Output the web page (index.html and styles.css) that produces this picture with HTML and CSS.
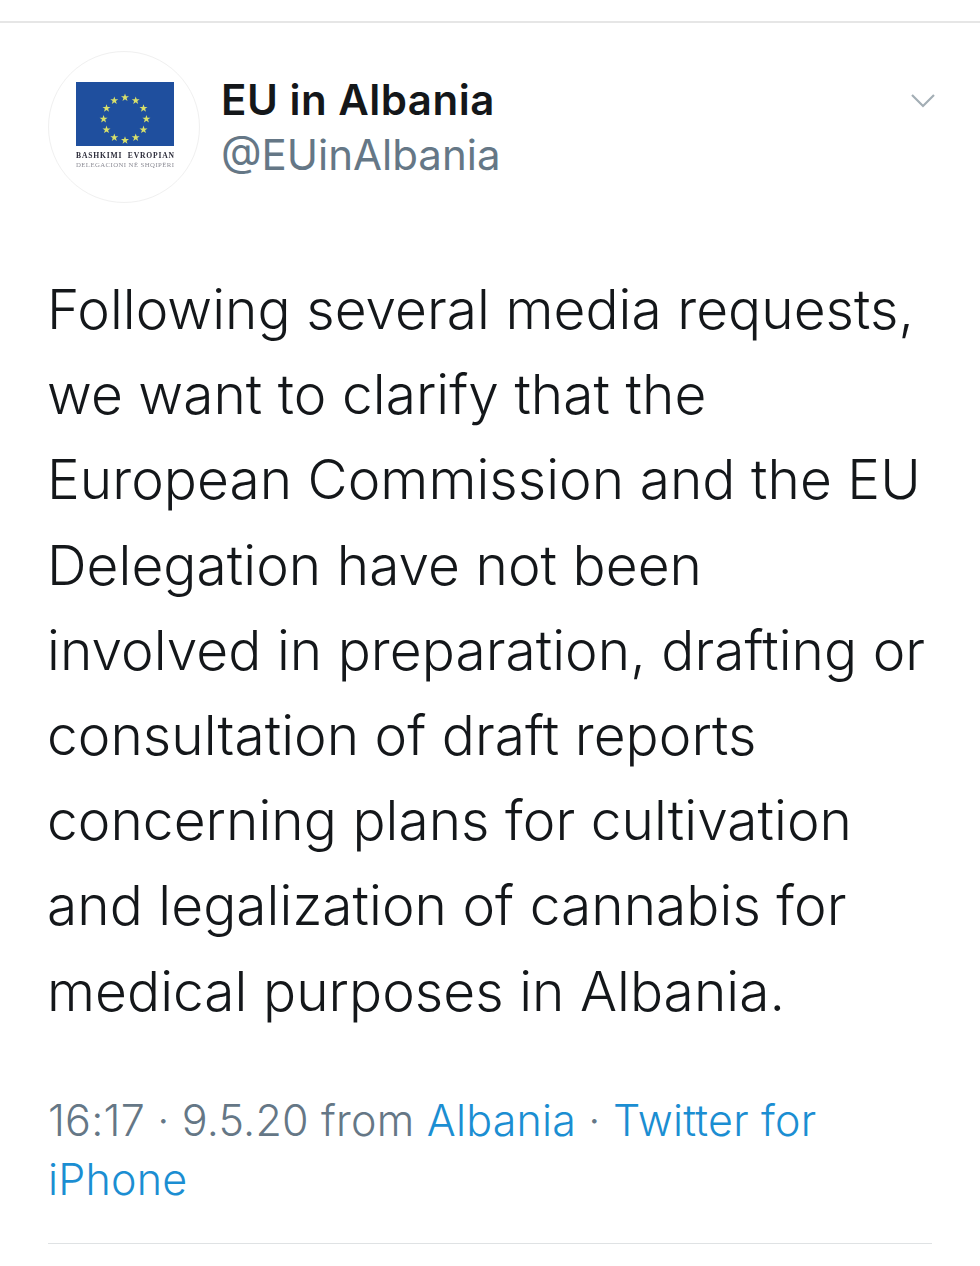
FILE: index.html
```html
<!DOCTYPE html>
<html lang="en">
<head>
<meta charset="utf-8">
<title>EU in Albania</title>
<link rel="stylesheet" href="styles.css">
</head>
<body>
<article class="tweet">
  <header class="head">
    <div class="avatar">
      <svg class="logo" width="152" height="152" viewBox="0 0 152 152">
        <rect x="28" y="31" width="98" height="64" fill="#1f4f9e"/>
        <g fill="#d8e06a">
          <polygon id="s" points="77,42.5 78,45.3 81,45.3 78.6,47.1 79.5,50 77,48.3 74.5,50 75.4,47.1 73,45.3 76,45.3"/>
          <use href="#s" x="10.7" y="2.9"/><use href="#s" x="18.5" y="10.7"/><use href="#s" x="21.4" y="21.4"/>
          <use href="#s" x="18.5" y="32.1"/><use href="#s" x="10.7" y="39.9"/><use href="#s" x="0" y="42.8"/>
          <use href="#s" x="-10.7" y="39.9"/><use href="#s" x="-18.5" y="32.1"/><use href="#s" x="-21.4" y="21.4"/>
          <use href="#s" x="-18.5" y="10.7"/><use href="#s" x="-10.7" y="2.9"/>
        </g>
        <text class="logo-top" x="77" y="107" text-anchor="middle" textLength="98" xml:space="preserve">BASHKIMI  EVROPIAN</text>
        <text class="logo-sub" x="77" y="116" text-anchor="middle" textLength="98">DELEGACIONI NË SHQIPËRI</text>
      </svg>
    </div>
    <div class="names">
      <div class="name">EU in Albania</div>
      <div class="handle">@EUinAlbania</div>
    </div>
    <svg class="chevron" width="26" height="16" viewBox="0 0 26 16"><path d="M2 2 L13 13 L24 2" fill="none" stroke="#a3aeb5" stroke-width="2.2"/></svg>
  </header>
  <p class="body">Following several media requests,<br>we want to clarify that the<br>European Commission and the EU<br>Delegation have not been<br>involved in preparation, drafting or<br>consultation of draft reports<br>concerning plans for cultivation<br>and legalization of cannabis for<br>medical purposes in Albania.</p>
  <p class="meta">16:17 · 9.5.20 from <span class="link">Albania</span> · <span class="link">Twitter for<br>iPhone</span></p>
</article>
</body>
</html>
```
FILE: styles.css
```css
html, body { margin: 0; padding: 0; background: #fff; }
body { font-family: Inter, "Liberation Sans", sans-serif; color: #14171a; }
.tweet {
  width: 884px;
  height: 1222px;
  margin: 21px 0 0;
  padding: 0 48px;
  border-top: 2px solid #e6e6e6;
  box-sizing: content-box;
  position: relative;
}
.tweet::after {
  content: "";
  display: block;
  height: 1px;
  background: #dfe2e4;
  margin-top: 34px;
}
.head { display: flex; align-items: flex-start; padding-top: 28px; height: 152px; }
.avatar {
  width: 150px; height: 150px;
  border: 1px solid #f0f0f0;
  border-radius: 50%;
  flex: none;
}
.logo { display: block; margin: -1px; filter: blur(0.4px); }
.logo-top { font: 700 7.6px "Liberation Serif", serif; fill: #2c2c3a; }
.logo-sub { font: 400 6.8px "Liberation Serif", serif; fill: #8d8d96; }
.names { margin-left: 21px; padding-top: 21px; flex: 1; }
.name { font-size: 42px; font-weight: 600; line-height: 55px; letter-spacing: 0.5px; }
.handle { font-size: 42px; font-weight: 400; line-height: 56px; color: #657786; }
.chevron { margin-top: 42px; margin-right: -4px; }
.body {
  margin: 64px 0 0 -1px;
  font-size: 55px;
  font-weight: 330;
  line-height: 85.2px;
  letter-spacing: 0.05px;
  white-space: nowrap;
}
.meta {
  margin: 57px 0 0;
  font-size: 43px;
  font-weight: 350;
  line-height: 59px;
  color: #657786;
  letter-spacing: 0.2px;
  white-space: nowrap;
}
.link { color: #1b8ed2; }
```
